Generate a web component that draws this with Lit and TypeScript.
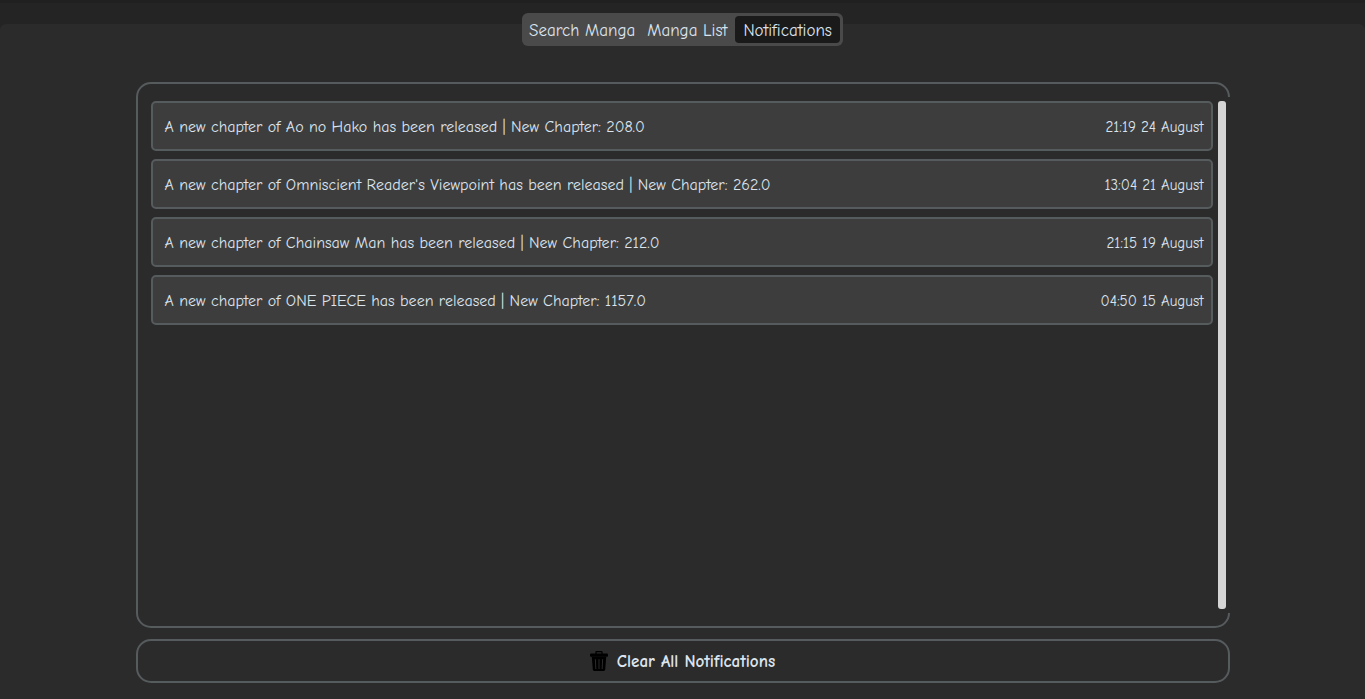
import { LitElement, html, css } from "lit";
import { customElement, property, state } from "lit/decorators.js";

interface Notice {
  title: string;
  chapter: string;
  time: string;
}

@customElement("notification-row")
class NotificationRow extends LitElement {
  @property({ attribute: false }) notice!: Notice;

  static styles = css`
    :host {
      display: flex;
      align-items: center;
      justify-content: space-between;
      gap: 16px;
      box-sizing: border-box;
      min-height: 50px;
      padding: 2px 7px 0 12px;
      border: 2px solid #565b5e;
      border-radius: 5px;
      background: #3d3d3d;
    }
    .message {
      font-size: 16px;
      line-height: 20px;
    }
    .time {
      font-size: 15px;
      line-height: 20px;
      white-space: nowrap;
    }
  `;

  render() {
    const { title, chapter, time } = this.notice;
    return html`
      <span class="message">A new chapter of ${title} has been released | New Chapter: ${chapter}</span>
      <time class="time">${time}</time>
    `;
  }
}

@customElement("app-root")
class AppRoot extends LitElement {
  @state() private active = "Notifications";
  @state() private notices: Notice[] = [
    { title: "Ao no Hako", chapter: "208.0", time: "21:19 24 August" },
    { title: "Omniscient Reader's Viewpoint", chapter: "262.0", time: "13:04 21 August" },
    { title: "Chainsaw Man", chapter: "212.0", time: "21:15 19 August" },
    { title: "ONE PIECE", chapter: "1157.0", time: "04:50 15 August" },
  ];

  static styles = css`
    :host {
      display: block;
      box-sizing: border-box;
      height: 100vh;
      background: #242424;
      border-top: 3px solid #202020;
      padding-top: 21px;
      color: #dce4ee;
      font-family: "Comic Sans MS", "Comic Neue", "Noto Sans", sans-serif;
      font-variant-ligatures: none;
    }
    .page {
      box-sizing: border-box;
      height: 100%;
      display: flex;
      flex-direction: column;
      align-items: center;
      padding-bottom: 16px;
      background: #2b2b2b;
      border-radius: 6px 6px 0 0;
    }
    .tabs {
      display: flex;
      gap: 4px;
      margin-top: -11px;
      margin-bottom: 36px;
      padding: 3px;
      border-radius: 6px;
      background: #4a4a4a;
    }
    .tab {
      height: 27px;
      padding: 2px 4px 0;
      border: 0;
      border-radius: 4px;
      background: transparent;
      color: inherit;
      font: inherit;
      font-size: 17px;
      font-variant-ligatures: none;
      line-height: 25px;
      cursor: pointer;
    }
    .tab.active {
      padding: 2px 8px 0;
      background: #1a1a1a;
    }
    .content {
      flex: 1;
      min-height: 0;
      width: calc(100% - 271px);
      display: flex;
      flex-direction: column;
      gap: 11px;
    }
    .panel {
      flex: 1;
      min-height: 0;
      display: flex;
      border: 2px solid #565b5e;
      border-radius: 15px;
      padding: 13px 0 13px 13px;
    }
    .scroller {
      flex: 1;
      display: flex;
      gap: 5px;
      margin-right: -2px;
      padding: 4px 4px 4px 0;
      background: #2b2b2b;
    }
    .list {
      flex: 1;
      display: flex;
      flex-direction: column;
      gap: 8px;
      overflow: hidden;
    }
    .thumb {
      width: 8px;
      border-radius: 3px;
      background: #d5d5d5;
    }
    .clear {
      display: flex;
      align-items: center;
      justify-content: center;
      gap: 9px;
      height: 44px;
      border: 2px solid #565b5e;
      border-radius: 15px;
      background: transparent;
      color: inherit;
      font: inherit;
      font-size: 17px;
      font-weight: 700;
      font-variant-ligatures: none;
      cursor: pointer;
    }
    .bin {
      width: 18px;
      height: 20px;
    }
  `;

  render() {
    return html`
      <main class="page">
        <nav class="tabs">
          ${["Search Manga", "Manga List", "Notifications"].map(
            (name) => html`<button
              class="tab ${name === this.active ? "active" : ""}"
              @click=${() => (this.active = name)}
            >${name}</button>`
          )}
        </nav>
        <section class="content">
          <div class="panel">
            <div class="scroller">
              <div class="list">
                ${this.notices.map((n) => html`<notification-row .notice=${n}></notification-row>`)}
              </div>
              <div class="thumb"></div>
            </div>
          </div>
          <button class="clear" @click=${() => (this.notices = [])}>
            <svg class="bin" viewBox="0 0 18 20" aria-hidden="true">
              <path d="M6 3V1.2Q6 .7 6.5 .7H11.5Q12 .7 12 1.2V3" fill="none" stroke="#000" stroke-width="1.3" />
              <rect x="0" y="2.5" width="18" height="3.3" rx="1" fill="#000" />
              <path d="M1.8 5.8H16.2L15.2 18.6Q15 20 13.8 20H4.2Q3 20 2.8 18.6Z" fill="#000" />
              <path d="M5.4 8.6L5.8 17.6M9 8.6V17.6M12.6 8.6L12.2 17.6" stroke="#2b2b2b" stroke-width="1" stroke-linecap="round" />
            </svg>
            <span>Clear All Notifications</span>
          </button>
        </section>
      </main>
    `;
  }
}
